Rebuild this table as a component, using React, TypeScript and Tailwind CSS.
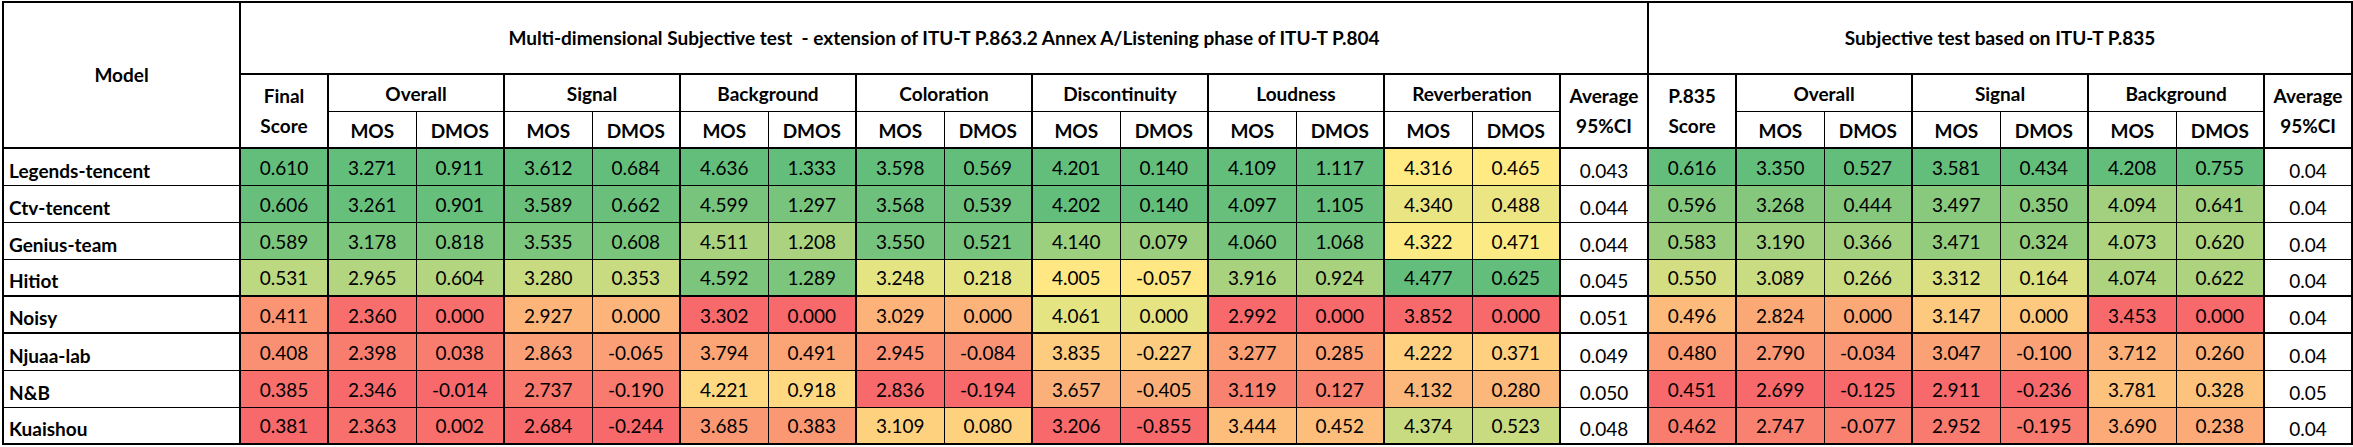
import React from "react";

// Excel 3-colour scale: min red, 50th percentile yellow, max green
const RED = [248, 105, 107];
const YELLOW = [255, 235, 132];
const GREEN = [99, 190, 123];

type Row = { name: string; left: string[]; avgLeft: string; right: string[]; avgRight: string };

const rows: Row[] = [
  {
    name: "Legends-tencent",
    left: ["0.610", "3.271", "0.911", "3.612", "0.684", "4.636", "1.333", "3.598", "0.569", "4.201", "0.140", "4.109", "1.117", "4.316", "0.465"],
    avgLeft: "0.043",
    right: ["0.616", "3.350", "0.527", "3.581", "0.434", "4.208", "0.755"],
    avgRight: "0.04",
  },
  {
    name: "Ctv-tencent",
    left: ["0.606", "3.261", "0.901", "3.589", "0.662", "4.599", "1.297", "3.568", "0.539", "4.202", "0.140", "4.097", "1.105", "4.340", "0.488"],
    avgLeft: "0.044",
    right: ["0.596", "3.268", "0.444", "3.497", "0.350", "4.094", "0.641"],
    avgRight: "0.04",
  },
  {
    name: "Genius-team",
    left: ["0.589", "3.178", "0.818", "3.535", "0.608", "4.511", "1.208", "3.550", "0.521", "4.140", "0.079", "4.060", "1.068", "4.322", "0.471"],
    avgLeft: "0.044",
    right: ["0.583", "3.190", "0.366", "3.471", "0.324", "4.073", "0.620"],
    avgRight: "0.04",
  },
  {
    name: "Hitiot",
    left: ["0.531", "2.965", "0.604", "3.280", "0.353", "4.592", "1.289", "3.248", "0.218", "4.005", "-0.057", "3.916", "0.924", "4.477", "0.625"],
    avgLeft: "0.045",
    right: ["0.550", "3.089", "0.266", "3.312", "0.164", "4.074", "0.622"],
    avgRight: "0.04",
  },
  {
    name: "Noisy",
    left: ["0.411", "2.360", "0.000", "2.927", "0.000", "3.302", "0.000", "3.029", "0.000", "4.061", "0.000", "2.992", "0.000", "3.852", "0.000"],
    avgLeft: "0.051",
    right: ["0.496", "2.824", "0.000", "3.147", "0.000", "3.453", "0.000"],
    avgRight: "0.04",
  },
  {
    name: "Njuaa-lab",
    left: ["0.408", "2.398", "0.038", "2.863", "-0.065", "3.794", "0.491", "2.945", "-0.084", "3.835", "-0.227", "3.277", "0.285", "4.222", "0.371"],
    avgLeft: "0.049",
    right: ["0.480", "2.790", "-0.034", "3.047", "-0.100", "3.712", "0.260"],
    avgRight: "0.04",
  },
  {
    name: "N&B",
    left: ["0.385", "2.346", "-0.014", "2.737", "-0.190", "4.221", "0.918", "2.836", "-0.194", "3.657", "-0.405", "3.119", "0.127", "4.132", "0.280"],
    avgLeft: "0.050",
    right: ["0.451", "2.699", "-0.125", "2.911", "-0.236", "3.781", "0.328"],
    avgRight: "0.05",
  },
  {
    name: "Kuaishou",
    left: ["0.381", "2.363", "0.002", "2.684", "-0.244", "3.685", "0.383", "3.109", "0.080", "3.206", "-0.855", "3.444", "0.452", "4.374", "0.523"],
    avgLeft: "0.048",
    right: ["0.462", "2.747", "-0.077", "2.952", "-0.195", "3.690", "0.238"],
    avgRight: "0.04",
  },
];

function mix(a: number[], b: number[], t: number) {
  const c = a.map((v, i) => Math.round(v + (b[i] - v) * t));
  return `rgb(${c[0]}, ${c[1]}, ${c[2]})`;
}

function scaleFor(values: number[]) {
  const s = [...values].sort((x, y) => x - y);
  const min = s[0];
  const max = s[s.length - 1];
  const pos = (s.length - 1) * 0.5;
  const lo = Math.floor(pos);
  const mid = s[lo] + (s[Math.min(lo + 1, s.length - 1)] - s[lo]) * (pos - lo);
  return (v: number) => {
    if (v <= mid) return mix(RED, YELLOW, mid === min ? 1 : (v - min) / (mid - min));
    return mix(YELLOW, GREEN, max === mid ? 1 : (v - mid) / (max - mid));
  };
}

const leftScales = rows[0].left.map((_, c) => scaleFor(rows.map((r) => parseFloat(r.left[c]))));
const rightScales = rows[0].right.map((_, c) => scaleFor(rows.map((r) => parseFloat(r.right[c]))));

const leftGroups = ["Overall", "Signal", "Background", "Coloration", "Discontinuity", "Loudness", "Reverberation"];
const rightGroups = ["Overall", "Signal", "Background"];

const th = "border border-black font-bold text-center align-middle p-0";

function ScoreCell({ value, color, thick }: { value: string; color: string; thick: boolean }) {
  return (
    <td
      className={`border border-black text-center align-middle p-0 pt-[2px] ${thick ? "border-l-2" : ""}`}
      style={{ backgroundColor: color }}
    >
      {value}
    </td>
  );
}

export default function App() {
  return (
    <div className="bg-white w-[2353px] h-[447px] pt-[1px] pl-[2px] font-[Lato,sans-serif] text-[19px] text-black leading-[24px]">
      <table className="border-collapse table-fixed w-[2349px] border-2 border-black">
        <colgroup>
          <col className="w-[237px]" />
          {Array.from({ length: 24 }).map((_, i) => (
            <col key={i} className="w-[88px]" />
          ))}
        </colgroup>
        <thead>
          <tr className="h-[72px]">
            <th rowSpan={3} className={`${th} border-2`}>
              Model
            </th>
            <th colSpan={16} className={`${th} border-2`}>
              Multi-dimensional Subjective test{"\u00a0"} - extension of ITU-T P.863.2 Annex A/Listening phase of ITU-T P.804
            </th>
            <th colSpan={8} className={`${th} border-2`}>
              Subjective test based on ITU-T P.835
            </th>
          </tr>
          <tr className="h-[37px]">
            <th rowSpan={2} className={`${th} border-2 leading-[30px]`}>
              Final
              <br />
              Score
            </th>
            {leftGroups.map((g) => (
              <th key={g} colSpan={2} className={`${th} border-x-2 border-t-2 pt-[2px]`}>
                {g}
              </th>
            ))}
            <th rowSpan={2} className={`${th} border-2 leading-[30px]`}>
              Average
              <br />
              95%CI
            </th>
            <th rowSpan={2} className={`${th} border-2 leading-[30px]`}>
              P.835
              <br />
              Score
            </th>
            {rightGroups.map((g) => (
              <th key={g} colSpan={2} className={`${th} border-x-2 border-t-2 pt-[2px]`}>
                {g}
              </th>
            ))}
            <th rowSpan={2} className={`${th} border-2 leading-[30px]`}>
              Average
              <br />
              95%CI
            </th>
          </tr>
          <tr className="h-[37px]">
            {[...leftGroups, ...rightGroups].map((g, i) => (
              <React.Fragment key={g + i}>
                <th className={`${th} border-l-2 border-b-2 pt-[4px]`}>MOS</th>
                <th className={`${th} border-r-2 border-b-2 pt-[4px]`}>DMOS</th>
              </React.Fragment>
            ))}
          </tr>
        </thead>
        <tbody>
          {rows.map((r, ri) => {
            const sep = ri === 3 || ri === 4 ? "border-b-2" : "";
            return (
              <tr key={r.name} className={`h-[37px] ${sep}`}>
                <td className={`border border-black border-r-2 font-bold text-left align-bottom pl-[5px] pb-[2px] ${sep}`}>
                  {r.name}
                </td>
                {r.left.map((v, c) => (
                  <ScoreCell key={c} value={v} color={leftScales[c](parseFloat(v))} thick={c === 0 || c % 2 === 1} />
                ))}
                <td className={`border border-black border-x-2 text-center align-bottom pb-[2px] ${sep}`}>{r.avgLeft}</td>
                {r.right.map((v, c) => (
                  <ScoreCell key={c} value={v} color={rightScales[c](parseFloat(v))} thick={c === 0 || c % 2 === 1} />
                ))}
                <td className={`border border-black border-x-2 text-center align-bottom pb-[2px] ${sep}`}>{r.avgRight}</td>
              </tr>
            );
          })}
        </tbody>
      </table>
    </div>
  );
}
